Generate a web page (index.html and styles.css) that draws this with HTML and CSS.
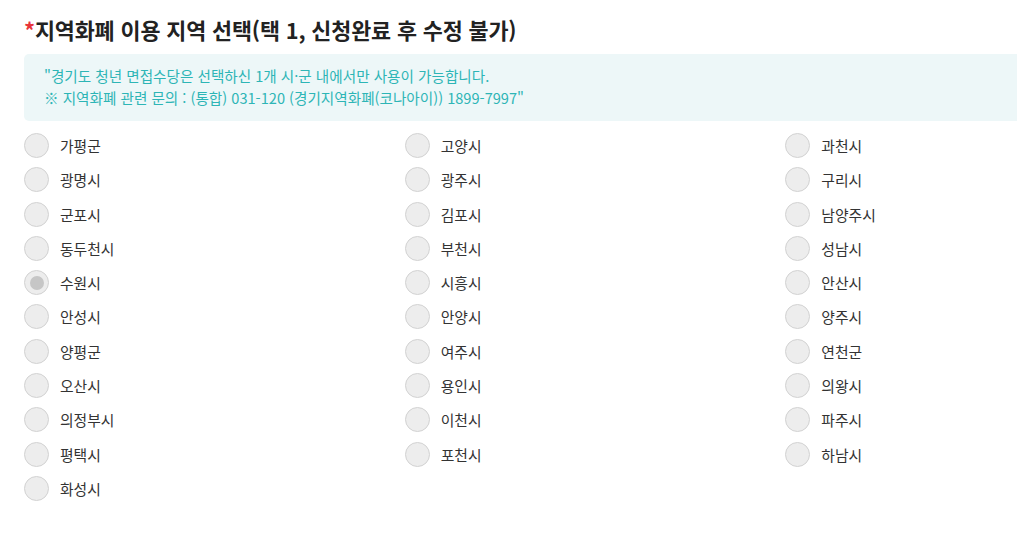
FILE: index.html
```html
<!DOCTYPE html>
<html lang="ko">
<head>
<meta charset="utf-8">
<link rel="stylesheet" href="styles.css">
</head>
<body>
<div class="page">
  <div class="wrap">
    <h2 class="title"><span class="req">*</span>지역화폐 이용 지역 선택(택 1, 신청완료 후 수정 불가)</h2>
    <div class="notice">
      <p>"경기도 청년 면접수당은 선택하신 1개 시·군 내에서만 사용이 가능합니다.</p>
      <p>※ 지역화폐 관련 문의 : (통합) 031-120 (경기지역화폐(코나아이)) 1899-7997"</p>
    </div>
    <div class="grid">
      <label class="item"><span class="radio"></span>가평군</label>
      <label class="item"><span class="radio"></span>고양시</label>
      <label class="item"><span class="radio"></span>과천시</label>
      <label class="item"><span class="radio"></span>광명시</label>
      <label class="item"><span class="radio"></span>광주시</label>
      <label class="item"><span class="radio"></span>구리시</label>
      <label class="item"><span class="radio"></span>군포시</label>
      <label class="item"><span class="radio"></span>김포시</label>
      <label class="item"><span class="radio"></span>남양주시</label>
      <label class="item"><span class="radio"></span>동두천시</label>
      <label class="item"><span class="radio"></span>부천시</label>
      <label class="item"><span class="radio"></span>성남시</label>
      <label class="item"><span class="radio checked"></span>수원시</label>
      <label class="item"><span class="radio"></span>시흥시</label>
      <label class="item"><span class="radio"></span>안산시</label>
      <label class="item"><span class="radio"></span>안성시</label>
      <label class="item"><span class="radio"></span>안양시</label>
      <label class="item"><span class="radio"></span>양주시</label>
      <label class="item"><span class="radio"></span>양평군</label>
      <label class="item"><span class="radio"></span>여주시</label>
      <label class="item"><span class="radio"></span>연천군</label>
      <label class="item"><span class="radio"></span>오산시</label>
      <label class="item"><span class="radio"></span>용인시</label>
      <label class="item"><span class="radio"></span>의왕시</label>
      <label class="item"><span class="radio"></span>의정부시</label>
      <label class="item"><span class="radio"></span>이천시</label>
      <label class="item"><span class="radio"></span>파주시</label>
      <label class="item"><span class="radio"></span>평택시</label>
      <label class="item"><span class="radio"></span>포천시</label>
      <label class="item"><span class="radio"></span>하남시</label>
      <label class="item"><span class="radio"></span>화성시</label>
    </div>
  </div>
</div>
</body>
</html>
```

FILE: styles.css
```css
html, body {
  margin: 0;
  padding: 0;
  background: #fff;
}
body {
  font-family: "Noto Sans CJK KR", "Noto Sans", sans-serif;
  color: #333;
  overflow: hidden;
}
.page {
  width: 1017px;
  height: 536px;
  overflow: hidden;
}
.wrap {
  width: 1142px;
  padding: 15px 0 0 24px;
}
.title {
  margin: 0;
  font-size: 21.8px;
  line-height: 30px;
  font-weight: 700;
  color: #222;
  letter-spacing: -0.15px;
}
.req {
  color: #e8343a;
}
.notice {
  margin-top: 9px;
  background: #edf7f8;
  border-radius: 5px;
  padding: 11px 20px 12px 20px;
  color: #2db5b6;
  font-size: 14.6px;
  line-height: 22px;
}
.notice p {
  margin: 0;
}
.grid {
  margin-top: 12px;
  display: grid;
  grid-template-columns: repeat(3, 1fr);
  grid-auto-rows: 34.3px;
}
.item {
  display: flex;
  align-items: center;
  gap: 11px;
  height: 25px;
  font-size: 14.8px;
  color: #333;
}
.radio {
  box-sizing: border-box;
  width: 25px;
  height: 25px;
  border-radius: 50%;
  border: 1px solid #d2d2d2;
  background: #ededed;
  display: flex;
  align-items: center;
  justify-content: center;
  flex: none;
}
.radio.checked::after {
  content: "";
  width: 14px;
  height: 14px;
  border-radius: 50%;
  background: #c6c6c6;
}
```
